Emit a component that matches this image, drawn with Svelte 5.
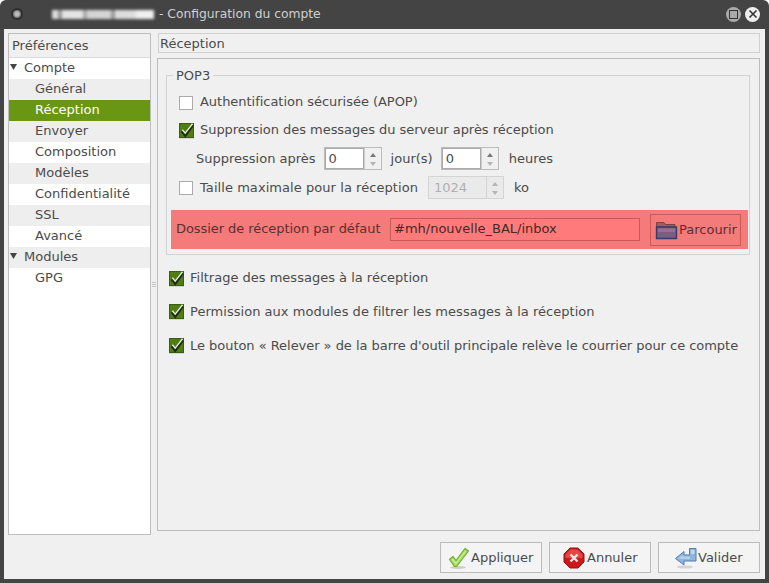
<script>
  const tree = [
    { label: 'Compte', top: true, open: true },
    { label: 'Général', alt: true },
    { label: 'Réception', selected: true },
    { label: 'Envoyer', alt: true },
    { label: 'Composition' },
    { label: 'Modèles', alt: true },
    { label: 'Confidentialité' },
    { label: 'SSL', alt: true },
    { label: 'Avancé' },
    { label: 'Modules', top: true, alt: true, open: true },
    { label: 'GPG' }
  ];
</script>

{#snippet check(on)}
  <span class="cb" class:on>
    {#if on}
      <svg width="15" height="15" viewBox="0 0 15 15"><path d="M3 8 6.200 12 13.500 2" fill="none" stroke="#1e2c0a" stroke-width="3.200"/><path d="M3.400 6.800 6.200 10.200 13.500 0.800" fill="none" stroke="#e8eedc" stroke-width="1.400"/></svg>
    {/if}
  </span>
{/snippet}

{#snippet spin(value, cls)}
  <span class="spin {cls}">
    <span class="spin-val">{value}</span>
    <span class="spin-btns">
      <svg width="8" height="16" viewBox="0 0 8 16"><path d="M4 2 7 6H1Z" fill={cls === 'off' ? '#b4b4b4' : '#777'}/><path d="M1 11H7L4 15Z" fill="#b4b4b4"/></svg>
    </span>
  </span>
{/snippet}

<div class="win">
  <header class="bar">
    <span class="menu"></span>
    <span class="blur"></span>
    <span class="title">- Configuration du compte</span>
    <span class="wbtn max"><i></i></span>
    <span class="wbtn close">
      <svg width="10" height="10" viewBox="0 0 10 10"><path d="M1.500 1.500 8.500 8.500M8.500 1.500 1.500 8.500" stroke="#333" stroke-width="1.600"/></svg>
    </span>
  </header>

  <div class="body">
    <div class="panes">
      <nav class="tree">
        <div class="tree-head">Préférences</div>
        {#each tree as r}
          <div class="row" class:top={r.top} class:alt={r.alt} class:sel={r.selected}>
            {#if r.top}<svg class="arrow" width="7" height="6" viewBox="0 0 7 6"><path d="M0 0H7L3.500 6Z" fill="#444"/></svg>{/if}
            {r.label}
          </div>
        {/each}
      </nav>

      <div class="grip"><i></i><i></i><i></i></div>

      <section class="main">
        <div class="pagetitle">Réception</div>
        <div class="frame">
          <fieldset class="group">
            <legend>POP3</legend>
            <div class="line l1">{@render check(false)}<span class="up tight-a">Authentification sécurisée (APOP)</span></div>
            <div class="line l2">{@render check(true)}<span class="up tight-b">Suppression des messages du serveur après réception</span></div>
            <div class="line l3">
              <span class="t1">Suppression après</span>
              {@render spin('0', 'on')}
              <span class="t2">jour(s)</span>
              {@render spin('0', 'on')}
              <span class="t3">heures</span>
            </div>
            <div class="line l4">
              {@render check(false)}<span class="t4">Taille maximale pour la réception</span>
              {@render spin('1024', 'off')}
              <span class="t5">ko</span>
            </div>
            <div class="redbar">
              <span class="redlabel">Dossier de réception par défaut</span>
              <span class="entry">#mh/nouvelle_BAL/inbox</span>
              <span class="browse">
                <svg width="23" height="23" viewBox="0 0 23 23">
                  <path d="M1.500 20V4.500H9L10.500 6.500H20V9H1.500Z" fill="#a35a62" stroke="#7d4048"/>
                  <path d="M1.500 9H21.500V20.500H1.500Z" fill="#7d5b82" stroke="#3a3a68" stroke-width="1.400"/>
                  <path d="M3 10.500H20V14H3Z" fill="#96708f"/>
                </svg>
                <span>Parcourir</span>
              </span>
            </div>
          </fieldset>
          <div class="opt o1">{@render check(true)}<span class="up">Filtrage des messages à la réception</span></div>
          <div class="opt o2">{@render check(true)}<span class="wide-p">Permission aux modules de filtrer les messages à la réception</span></div>
          <div class="opt o3">{@render check(true)}<span class="tight-l">Le bouton « Relever » de la barre d'outil principale relève le courrier pour ce compte</span></div>
        </div>
      </section>
    </div>

    <footer class="foot">
      <span class="btn b1">
        <svg width="24" height="24" viewBox="0 0 24 24">
          <ellipse cx="11" cy="21.500" rx="8" ry="1.500" fill="#ccc"/>
          <path d="M2.500 13.500 6 10.500 9 14.500 18 2.500 21.500 5 9.500 20.500H7.500Z" fill="#a5dc5c" stroke="#6fae2e" stroke-width="1.200" stroke-linejoin="round"/>
          <path d="M5 13 9 17.500 18.500 5" fill="none" stroke="#cdf09a" stroke-width="1.200"/>
        </svg>
        <span>Appliquer</span>
      </span>
      <span class="btn b2">
        <svg width="22" height="22" viewBox="0 0 22 22">
          <path d="M7 1H15L21 7V15L15 21H7L1 15V7Z" fill="#cc1a1a" stroke="#9a1010"/>
          <path d="M7.500 2.500H14.500L19.500 7.500V11H2.500V7.500Z" fill="#e04848"/>
          <path d="M7.500 7.500 14.500 14.500M14.500 7.500 7.500 14.500" stroke="#f6e4e4" stroke-width="2.400"/>
        </svg>
        <span>Annuler</span>
      </span>
      <span class="btn b3">
        <svg width="24" height="24" viewBox="0 0 24 24">
          <ellipse cx="11" cy="21" rx="8" ry="1.600" fill="#d4d4d4"/>
          <path d="M1.500 12.500 10 5.500V9H15.500V2.500H22V15H10V19Z" fill="#8fb5dc" stroke="#4f7fb5" stroke-linejoin="round"/>
          <path d="M17 4H20.500V8H17Z" fill="#c3d7ec"/>
          <path d="M4 12.500 9 9V10.500H16V13H9Z" fill="#b5cfe8"/>
        </svg>
        <span>Valider</span>
      </span>
    </footer>
  </div>
</div>

<style>
  :global(body) { margin: 0; background: #fff; }
  .win {
    width: 769px; height: 583px; box-sizing: border-box;
    display: flex; flex-direction: column;
    font: 13px/1 "DejaVu Sans", sans-serif; color: #4b4b4b;
    background: #444; border-radius: 6px 6px 0 0; overflow: hidden;
  }
  .bar { height: 29px; flex: none; display: flex; align-items: center; color: #d0d0d0; font-size: 12.300px; padding-bottom: 1px; box-sizing: border-box; }
  .menu {
    width: 8px; height: 8px; margin-left: 13px; border-radius: 50%;
    background: radial-gradient(#bbb 30%, #666 75%); box-shadow: 0 0 0 2px #2e2e2e;
  }
  .blur {
    width: 102px; height: 9px; margin-left: 31px;
    background: linear-gradient(90deg, #ddd 0 6%, #999 6% 10%, #e4e4e4 10% 30%, #aaa 30% 34%, #d4d4d4 34% 58%, #999 58% 62%, #ddd 62% 82%, #f0f0f0 82% 100%);
    filter: blur(1.500px);
  }
  .title { margin-left: 5px; flex: 1; }
  .wbtn { width: 15px; height: 15px; border-radius: 50%; display: flex; align-items: center; justify-content: center; }
  .max { background: #aaa; margin-right: 4px; }
  .max i { width: 7px; height: 7px; border: 1px solid #333; }
  .close { background: #eee; margin-right: 9px; }
  .body { flex: 1; min-height: 0; margin: 0 4px 4px; background: #f0f0f0; padding: 4px 5px 6px 4px; display: flex; flex-direction: column; }
  .panes { flex: 1; min-height: 0; display: flex; }
  .tree { width: 143px; box-sizing: border-box; border: 1px solid #bdbdbd; background: #fff; }
  .tree-head { height: 23px; line-height: 23px; padding-left: 3px; border-bottom: 1px solid #dcdcdc; background: #f0f0f0; }
  .row { height: 21px; line-height: 19px; padding-left: 26px; position: relative; }
  .row.top { padding-left: 15px; }
  .row.alt { background: #eee; }
  .row.sel { background: #699613; color: #fff; }
  .arrow { position: absolute; left: 1px; top: 6px; }
  .grip { width: 6px; flex: none; display: flex; flex-direction: column; gap: 1px; justify-content: center; align-items: center; }
  .grip i { width: 4px; height: 1px; background: #c4c4c4; }
  .main { flex: 1; min-width: 0; display: flex; flex-direction: column; padding-bottom: 4px; }
  .pagetitle { margin: 0 0 5px 1px; height: 20px; box-sizing: border-box; border: 1px solid #d0d0d0; line-height: 19px; padding-left: 1px; }
  .frame { flex: 1; border: 1px solid #bdbdbd; padding: 16px 9px 0 8px; display: flex; flex-direction: column; }
  .group { margin: 0; padding: 0; border: 1px solid #d2d2d2; height: 180px; box-sizing: border-box; position: relative; }
  legend { margin-left: 6px; padding: 0 3px; font-size: 13px; position: absolute; top: -7px; background: #f0f0f0; }
  .line { display: flex; align-items: center; height: 23px; padding-left: 12px; }
  .up { padding-bottom: 2px; }
  .l1 { margin-top: 15px; }
  .l2 { margin-top: 5px; }
  .l3 { margin-top: 5px; padding-left: 29px; }
  .l4 { margin-top: 6px; }
  .cb { width: 14px; height: 14px; box-sizing: border-box; border: 1px solid #aaa; background: #fff; flex: none; margin-right: 7px; display: block; position: relative; }
  .cb.on { width: 15px; height: 15px; margin-right: 6px; background: #4f7f14; border-color: #3c5c12; box-shadow: 0 1px 0 #d6d6d6; }
  .cb svg { position: absolute; left: -1px; top: -1px; overflow: visible; }
  .tight-a { letter-spacing: -0.030px; }
  .tight-b { letter-spacing: -0.040px; }
  .wide-p { letter-spacing: 0.030px; }
  .tight-l { letter-spacing: -0.035px; }
  .t1 { margin-right: 8px; }
  .t2 { margin: 0 8px 0 9px; }
  .t3 { margin-left: 10px; }
  .t4 { margin-right: 10px; letter-spacing: 0.060px; }
  .t5 { margin-left: 10px; }
  .spin { display: flex; height: 23px; box-sizing: border-box; border: 1px solid #bbb; flex: none; }
  .spin.on { width: 58px; }
  .spin.off { width: 76px; background: #eaeaea; border-color: #d4d4d4; color: #b0b0b0; }
  .spin-val { flex: 1; line-height: 21px; padding-left: 4px; border-right: 1px solid #d4d4d4; }
  .spin.off .spin-val { padding-left: 5px; }
  .spin.on .spin-val { background: #fff; border-right-color: #ccc; box-shadow: 0 0 0 1px #aaa inset; }
  .spin-btns { width: 16px; display: flex; align-items: center; justify-content: center; }
  .redbar {
    margin: 11px 1px 0 4px; height: 39px; display: flex; align-items: center;
    background: #f57b7b; color: #5c2f2f; padding-left: 5px;
  }
  .redlabel { width: 214px; flex: none; letter-spacing: -0.060px; padding-bottom: 2px; }
  .entry { width: 250px; height: 23px; box-sizing: border-box; border: 1px solid #c95a5a; background: #ff7b7b; line-height: 19px; padding-left: 3px; color: #472626; flex: none; }
  .browse { margin-left: 10px; width: 91px; height: 32px; box-sizing: border-box; border: 1px solid #c95a5a; display: flex; align-items: center; gap: 1px; padding-left: 4px; white-space: nowrap; }
  .opt { display: flex; align-items: center; height: 14px; padding-left: 3px; }
  .o1 { margin-top: 16px; }
  .o2 { margin-top: 19px; }
  .o3 { margin-top: 20px; }
  .foot { flex: none; display: flex; justify-content: flex-end; gap: 7px; padding: 7px 0 0; }
  .btn { width: 102px; height: 31px; box-sizing: border-box; border: 1px solid #bbb; background: #f4f4f4; display: flex; align-items: center; }
  .b1 { padding-left: 6px; }
  .b2 { padding-left: 13px; gap: 2px; }
  .b3 { padding-left: 15px; }
</style>
